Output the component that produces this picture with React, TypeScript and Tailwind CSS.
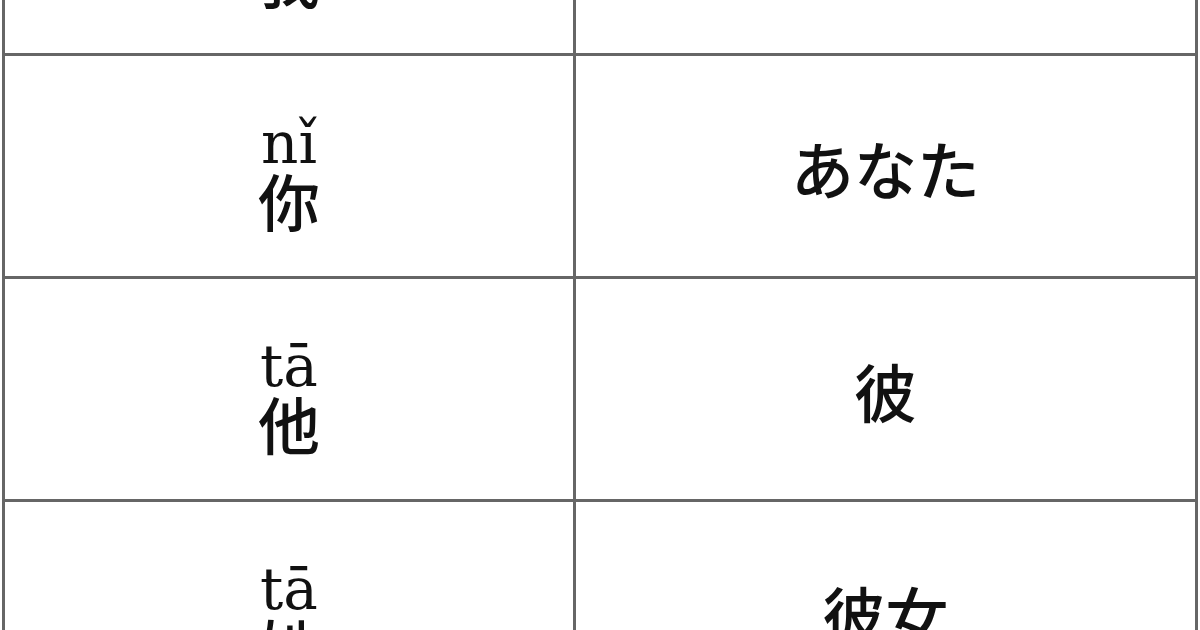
import React from "react";

const rows = [
  { py: "wǒ", zh: "我", ja: "私" },
  { py: "nǐ", zh: "你", ja: "あなた" },
  { py: "tā", zh: "他", ja: "彼" },
  { py: "tā", zh: "她", ja: "彼女" },
];

export default function App() {
  return (
    <div className="w-[1200px] h-[630px] overflow-hidden bg-white">
      <table className="ml-[2px] mt-[-170px] w-[1196px] table-fixed border-collapse blur-[0.7px]">
        <colgroup>
          <col className="w-[571px]" />
          <col />
        </colgroup>
        <tbody>
          {rows.map((r, i) => (
            <tr key={i} className="h-[223px]">
              <td className="border-[3px] border-[#666666] p-0 pt-[58px] align-top text-center text-[#111111]">
                <div className="text-[58px] leading-[58px] font-['DejaVu_Serif',serif]">{r.py}</div>
                <div className="mt-[-3px] text-[62px] leading-[62px] font-medium font-['Noto_Sans_CJK_SC',sans-serif]">{r.zh}</div>
              </td>
              <td className="border-[3px] border-[#666666] p-0 align-middle text-center text-[#111111]">
                <div className="text-[63px] leading-[63px] font-medium font-['Noto_Sans_CJK_JP',sans-serif]">{r.ja}</div>
              </td>
            </tr>
          ))}
        </tbody>
      </table>
    </div>
  );
}
